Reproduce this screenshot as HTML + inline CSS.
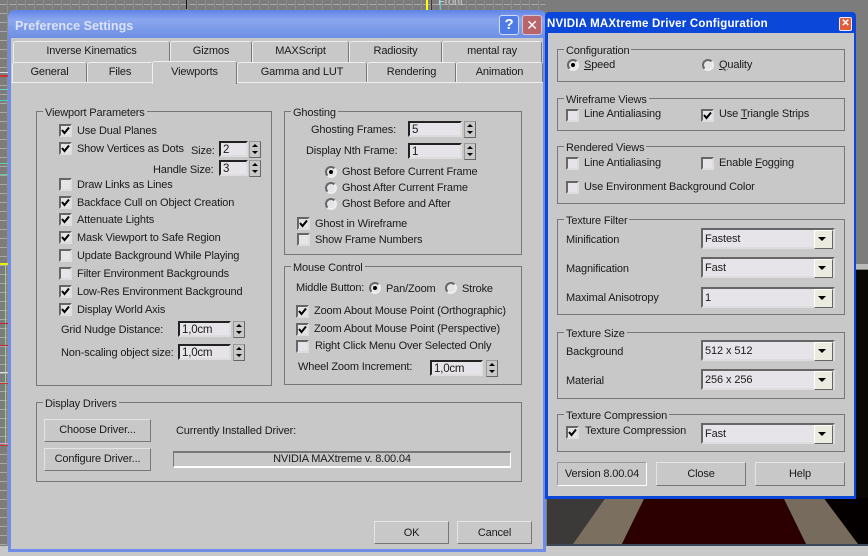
<!DOCTYPE html>
<html><head><meta charset="utf-8"><style>
html,body{margin:0;padding:0}
body{width:868px;height:556px;overflow:hidden;position:relative;background:#7c7c7c;font-family:"Liberation Sans",sans-serif;font-size:11px;letter-spacing:-.15px;color:#1a1a1a}
div,span.t{position:absolute;box-sizing:border-box}
.t{white-space:nowrap;line-height:14px;height:14px;margin-top:1px}
.g{border:1px solid #777}
.l{background:#c8c8c8;padding:0 2px;line-height:14px;height:14px;white-space:nowrap;margin-top:1px}
.cb{width:13px;height:13px;background:#e6e4e8;border:2px solid;border-color:#666 #ddd #ddd #666}
.cb svg{position:absolute;left:0;top:0}
.r{width:12px;height:12px;border-radius:50%;background:#e6e4e8;border:2px solid;border-color:#666 #eee #eee #666}
.r.on::after{content:"";position:absolute;left:2px;top:2px;width:4px;height:4px;border-radius:50%;background:#000}
.e{background:#e6e4e8;border:2px solid;border-color:#222 #ddd #ddd #222;font-size:11.5px;letter-spacing:-.2px;line-height:14px;padding-left:2px;height:16px}
.s{width:12px;height:17px;background:#c8c8c8;border:1px solid #999;border-bottom-color:#666;border-right-color:#666}
.s::before{content:"";position:absolute;left:2px;top:2px;border:3px solid transparent;border-top:0;border-bottom:3px solid #000}
.s::after{content:"";position:absolute;left:2px;top:9px;border:3px solid transparent;border-bottom:0;border-top:3px solid #000}
.b{background:#c8c8c8;border:1px solid;border-color:#e4e4e4 #777 #777 #e4e4e4;text-align:center;white-space:nowrap}
.c{background:#e6e4e8;border:2px solid;border-color:#666 #ddd #ddd #666;width:134px;height:21px;line-height:18px;padding-left:2px;font-size:11px;letter-spacing:-.1px}
.c i{position:absolute;right:0;top:0;width:17px;height:17px;background:#ecebdf;border:1px solid;border-color:#fff #666 #666 #fff}
.c i::after{content:"";position:absolute;left:3px;top:6px;border:4px solid transparent;border-bottom:0;border-top:4px solid #000}
.tab{background:#c8c8c8;border:1px solid;border-color:#eee #777 transparent #eee;border-radius:3px 3px 0 0;text-align:center;font-size:11px;white-space:nowrap;line-height:19px}
u{text-decoration:underline}
</style></head><body>
<svg width="868" height="556" style="position:absolute;left:0;top:0">
<defs><pattern id="gh" width="9" height="9" patternUnits="userSpaceOnUse"><rect width="9" height="9" fill="#7c7c7c"/><rect y="4" width="7" height="1" fill="#a8a8a8"/><rect x="7" width="1" height="9" fill="#8d8d8d"/></pattern>
<symbol id="k" viewBox="0 0 9 9"><path d="M1 4 L3.5 7 L8 1.5" fill="none" stroke="#000" stroke-width="2"/></symbol></defs>
<rect width="868" height="12" fill="url(#gh)"/><rect width="12" height="556" fill="url(#gh)"/>
<rect x="545" y="0" width="323" height="12" fill="#7c7c7c"/>
<rect x="186" y="0" width="1" height="9" fill="#111"/>
<rect x="426" y="0" width="2" height="10" fill="#ff0"/><rect x="431" y="0" width="1" height="10" fill="#334"/><rect x="440" y="0" width="1" height="10" fill="#5cc"/>
<text x="438" y="5" font-size="11" fill="#ccc" font-family="Liberation Sans">Front</text>
<rect x="0" y="75" width="9" height="2" fill="#c33"/><rect x="0" y="72" width="9" height="1" fill="#ddd"/><rect x="0" y="89" width="9" height="1" fill="#6cc"/><rect x="0" y="100" width="9" height="1" fill="#4cc"/><rect x="0" y="163" width="9" height="1" fill="#6c9"/><rect x="0" y="174" width="9" height="1" fill="#6c9"/>
<rect x="0" y="263" width="9" height="2" fill="#ee0"/><rect x="5" y="265" width="1" height="180" fill="#9c9"/><rect x="0" y="323" width="9" height="1" fill="#c22"/><rect x="0" y="345" width="9" height="1" fill="#c22"/>
<rect x="0" y="372" width="9" height="1" fill="#ddd"/><rect x="0" y="383" width="9" height="1" fill="#c33"/><rect x="0" y="443" width="9" height="1" fill="#e9c"/><rect x="0" y="445" width="9" height="1" fill="#c33"/>
<rect x="0" y="546" width="868" height="10" fill="#c8c8c8"/>
<rect x="547" y="497" width="321" height="47" fill="#050000"/>
<polygon points="547,497 606,497 573,544 547,544" fill="#3c3a38"/>
<polygon points="606,497 645,497 622,544 573,544" fill="#7b6f60"/>
<polygon points="645,497 783,497 806,544 622,544" fill="#2c0000"/>
<polygon points="783,497 823,497 858,544 806,544" fill="#766b5c"/>
<rect x="547" y="544" width="321" height="2" fill="#3a4858"/>
<rect x="856" y="264" width="12" height="5" fill="#bbb"/><rect x="856" y="270" width="12" height="228" fill="#0a0805"/>
</svg>

<!-- Preference dialog -->
<div style="left:8px;top:10px;width:538px;height:542px;background:#6f8de6;border-radius:7px 7px 0 0"></div>
<div style="left:8px;top:10px;width:538px;height:28px;background:linear-gradient(#5f84e4,#8aa6ee 35%,#6d8fe4);border-radius:7px 7px 0 0"></div>
<div class="t" style="left:15px;top:17px;height:16px;line-height:16px;font-size:12.6px;font-weight:bold;color:#d9e2f7;letter-spacing:0">Preference Settings</div>
<div style="left:499px;top:15px;width:20px;height:20px;background:#4f7be6;border:1px solid #cfdcf8;border-radius:3px;color:#fff;font-weight:bold;font-size:15px;line-height:18px;text-align:center">?</div>
<div style="left:522px;top:15px;width:20px;height:20px;background:#b8666c;border:1px solid #d8c0d0;border-radius:3px;color:#fff;font-size:14px;line-height:18px;text-align:center">&#10005;</div>
<div style="left:11px;top:38px;width:532px;height:511px;background:#c8c8c8"></div>

<div class="tab" style="left:13px;top:41px;width:157px;height:22px">Inverse Kinematics</div>
<div class="tab" style="left:170px;top:41px;width:82px;height:22px">Gizmos</div>
<div class="tab" style="left:252px;top:41px;width:97px;height:22px">MAXScript</div>
<div class="tab" style="left:349px;top:41px;width:93px;height:22px">Radiosity</div>
<div class="tab" style="left:442px;top:41px;width:100px;height:22px">mental ray</div>
<div class="tab" style="left:12px;top:62px;width:75px;height:21px">General</div>
<div class="tab" style="left:87px;top:62px;width:66px;height:21px">Files</div>
<div class="tab" style="left:237px;top:62px;width:130px;height:21px">Gamma and LUT</div>
<div class="tab" style="left:367px;top:62px;width:89px;height:21px">Rendering</div>
<div class="tab" style="left:456px;top:62px;width:87px;height:21px">Animation</div>
<div style="left:11px;top:82px;width:532px;height:1px;background:#eee"></div>
<div class="tab" style="left:152px;top:61px;width:85px;height:23px;border-bottom:0;line-height:21px">Viewports</div>

<div class="g" style="left:36px;top:111px;width:236px;height:275px"></div>
<div class="l" style="left:43px;top:105px">Viewport Parameters</div>
<div class="cb" style="left:59px;top:124px"><svg width="9" height="9"><use href="#k"/></svg></div><div class="t" style="left:77px;top:123px">Use Dual Planes</div>
<div class="cb" style="left:59px;top:142px"><svg width="9" height="9"><use href="#k"/></svg></div><div class="t" style="left:77px;top:141px">Show Vertices as Dots</div>
<div class="t" style="left:191px;top:143px">Size:</div><div class="e" style="left:219px;top:141px;width:29px">2</div><div class="s" style="left:249px;top:141px"></div>
<div class="t" style="left:153px;top:162px">Handle Size:</div><div class="e" style="left:219px;top:160px;width:29px">3</div><div class="s" style="left:249px;top:160px"></div>
<div class="cb" style="left:59px;top:178px"></div><div class="t" style="left:77px;top:177px">Draw Links as Lines</div>
<div class="cb" style="left:59px;top:196px"><svg width="9" height="9"><use href="#k"/></svg></div><div class="t" style="left:77px;top:195px">Backface Cull on Object Creation</div>
<div class="cb" style="left:59px;top:213px"><svg width="9" height="9"><use href="#k"/></svg></div><div class="t" style="left:77px;top:212px">Attenuate Lights</div>
<div class="cb" style="left:59px;top:231px"><svg width="9" height="9"><use href="#k"/></svg></div><div class="t" style="left:77px;top:230px">Mask Viewport to Safe Region</div>
<div class="cb" style="left:59px;top:249px"></div><div class="t" style="left:77px;top:248px">Update Background While Playing</div>
<div class="cb" style="left:59px;top:267px"></div><div class="t" style="left:77px;top:266px">Filter Environment Backgrounds</div>
<div class="cb" style="left:59px;top:285px"><svg width="9" height="9"><use href="#k"/></svg></div><div class="t" style="left:77px;top:284px">Low-Res Environment Background</div>
<div class="cb" style="left:59px;top:303px"><svg width="9" height="9"><use href="#k"/></svg></div><div class="t" style="left:77px;top:302px">Display World Axis</div>
<div class="t" style="left:61px;top:322px">Grid Nudge Distance:</div><div class="e" style="left:178px;top:321px;width:53px">1,0cm</div><div class="s" style="left:233px;top:321px"></div>
<div class="t" style="left:61px;top:345px">Non-scaling object size:</div><div class="e" style="left:178px;top:344px;width:53px">1,0cm</div><div class="s" style="left:233px;top:344px"></div>

<div class="g" style="left:284px;top:111px;width:238px;height:144px"></div>
<div class="l" style="left:291px;top:105px">Ghosting</div>
<div class="t" style="left:311px;top:122px">Ghosting Frames:</div><div class="e" style="left:408px;top:121px;width:54px">5</div><div class="s" style="left:464px;top:121px"></div>
<div class="t" style="left:306px;top:143px">Display Nth Frame:</div><div class="e" style="left:408px;top:143px;width:54px">1</div><div class="s" style="left:464px;top:143px"></div>
<div class="r on" style="left:325px;top:166px"></div><div class="t" style="left:342px;top:164px">Ghost Before Current Frame</div>
<div class="r" style="left:325px;top:182px"></div><div class="t" style="left:342px;top:180px">Ghost After Current Frame</div>
<div class="r" style="left:325px;top:198px"></div><div class="t" style="left:342px;top:196px">Ghost Before and After</div>
<div class="cb" style="left:297px;top:217px"><svg width="9" height="9"><use href="#k"/></svg></div><div class="t" style="left:315px;top:216px">Ghost in Wireframe</div>
<div class="cb" style="left:297px;top:233px"></div><div class="t" style="left:315px;top:232px">Show Frame Numbers</div>

<div class="g" style="left:284px;top:266px;width:238px;height:119px"></div>
<div class="l" style="left:291px;top:260px">Mouse Control</div>
<div class="t" style="left:296px;top:280px">Middle Button:</div>
<div class="r on" style="left:369px;top:282px"></div><div class="t" style="left:386px;top:281px">Pan/Zoom</div>
<div class="r" style="left:445px;top:282px"></div><div class="t" style="left:462px;top:281px">Stroke</div>
<div class="cb" style="left:296px;top:305px"><svg width="9" height="9"><use href="#k"/></svg></div><div class="t" style="left:314px;top:303px">Zoom About Mouse Point (Orthographic)</div>
<div class="cb" style="left:296px;top:323px"><svg width="9" height="9"><use href="#k"/></svg></div><div class="t" style="left:314px;top:321px">Zoom About Mouse Point (Perspective)</div>
<div class="cb" style="left:296px;top:340px"></div><div class="t" style="left:315px;top:338px">Right Click Menu Over Selected Only</div>
<div class="t" style="left:298px;top:359px">Wheel Zoom Increment:</div><div class="e" style="left:430px;top:360px;width:53px">1,0cm</div><div class="s" style="left:486px;top:360px"></div>

<div class="g" style="left:36px;top:402px;width:486px;height:80px"></div>
<div class="l" style="left:43px;top:396px">Display Drivers</div>
<div class="b" style="left:44px;top:419px;width:107px;height:23px;line-height:21px">Choose Driver...</div>
<div class="b" style="left:44px;top:448px;width:107px;height:23px;line-height:21px">Configure Driver...</div>
<div class="t" style="left:176px;top:423px">Currently Installed Driver:</div>
<div style="left:173px;top:451px;width:338px;height:17px;border:1px solid;border-color:#777 #fff #fff #777;border-top-width:2px;border-bottom-width:2px;text-align:center;line-height:13px">NVIDIA MAXtreme v. 8.00.04</div>
<div class="b" style="left:374px;top:521px;width:75px;height:23px;line-height:22px">OK</div>
<div class="b" style="left:457px;top:521px;width:75px;height:23px;line-height:22px">Cancel</div>

<!-- Maxtreme dialog -->
<div style="left:545px;top:12px;width:311px;height:487px;background:#0b47d8;border-radius:4px 4px 0 0"></div>
<div style="left:548px;top:33px;width:306px;height:463px;background:#c8c8c8"></div>
<div class="t" style="left:547px;top:16px;height:15px;line-height:15px;font-size:11.5px;font-weight:bold;color:#fff;letter-spacing:.2px">NVIDIA MAXtreme Driver Configuration</div>
<div style="left:839px;top:17px;width:13px;height:14px;background:#e25b3c;border:1px solid #eee;border-radius:2px;color:#fff;font-size:10px;line-height:12px;text-align:center;font-weight:bold">&#10005;</div>

<div class="g" style="left:557px;top:49px;width:288px;height:33px"></div><div class="l" style="left:564px;top:43px">Configuration</div>
<div class="r on" style="left:567px;top:59px"></div><div class="t" style="left:584px;top:57px"><u>S</u>peed</div>
<div class="r" style="left:702px;top:59px"></div><div class="t" style="left:719px;top:57px"><u>Q</u>uality</div>

<div class="g" style="left:557px;top:98px;width:288px;height:33px"></div><div class="l" style="left:564px;top:92px">Wireframe Views</div>
<div class="cb" style="left:566px;top:109px"></div><div class="t" style="left:584px;top:106px">Line Antialiasing</div>
<div class="cb" style="left:701px;top:109px"><svg width="9" height="9"><use href="#k"/></svg></div><div class="t" style="left:719px;top:106px">Use <u>T</u>riangle Strips</div>

<div class="g" style="left:557px;top:146px;width:288px;height:58px"></div><div class="l" style="left:564px;top:140px">Rendered Views</div>
<div class="cb" style="left:566px;top:157px"></div><div class="t" style="left:584px;top:155px">Line Antialiasing</div>
<div class="cb" style="left:701px;top:157px"></div><div class="t" style="left:719px;top:155px">Enable <u>F</u>ogging</div>
<div class="cb" style="left:566px;top:181px"></div><div class="t" style="left:584px;top:179px">Use Environment Background Color</div>

<div class="g" style="left:557px;top:219px;width:288px;height:96px"></div><div class="l" style="left:564px;top:213px">Texture Filter</div>
<div class="t" style="left:566px;top:232px">Minification</div><div class="c" style="left:701px;top:228px">Fastest<i></i></div>
<div class="t" style="left:566px;top:261px">Magnification</div><div class="c" style="left:701px;top:257px">Fast<i></i></div>
<div class="t" style="left:566px;top:290px">Maximal Anisotropy</div><div class="c" style="left:701px;top:287px">1<i></i></div>

<div class="g" style="left:557px;top:332px;width:288px;height:67px"></div><div class="l" style="left:564px;top:326px">Texture Size</div>
<div class="t" style="left:566px;top:344px">Background</div><div class="c" style="left:701px;top:340px">512 x 512<i></i></div>
<div class="t" style="left:566px;top:373px">Material</div><div class="c" style="left:701px;top:369px">256 x 256<i></i></div>

<div class="g" style="left:557px;top:414px;width:288px;height:38px"></div><div class="l" style="left:564px;top:408px">Texture Compression</div>
<div class="cb" style="left:566px;top:426px"><svg width="9" height="9"><use href="#k"/></svg></div><div class="t" style="left:585px;top:423px">Texture Compression</div>
<div class="c" style="left:701px;top:423px">Fast<i></i></div>

<div style="left:557px;top:462px;width:90px;height:24px;border:1px solid;border-color:#999 #fff #fff #999;text-align:center;line-height:23px">Version 8.00.04</div>
<div class="b" style="left:656px;top:462px;width:90px;height:24px;line-height:22px">Close</div>
<div class="b" style="left:755px;top:462px;width:90px;height:24px;line-height:22px">Help</div>
</body></html>
